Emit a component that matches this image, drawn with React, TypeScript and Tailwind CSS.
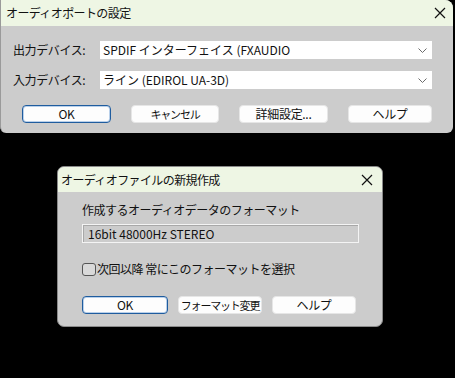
import React from "react";

const font = { fontFamily: '"Noto Sans CJK JP", "Noto Sans", sans-serif' };

function CloseIcon() {
  return (
    <svg width="12" height="12" viewBox="0 0 12 12" className="shrink-0">
      <path d="M1 1 L11 11 M11 1 L1 11" stroke="#111" strokeWidth="1.2" fill="none" />
    </svg>
  );
}

function Chevron() {
  return (
    <svg width="9" height="5" viewBox="0 0 9 5" className="shrink-0">
      <path d="M0.5 0.5 L4.5 4.5 L8.5 0.5" stroke="#6b6b6b" strokeWidth="1" fill="none" />
    </svg>
  );
}

function Btn({ label, w, primary, tight }: { label: string; w: string; primary?: boolean; tight?: boolean }) {
  return (
    <div
      className={`${w} h-[18px] shrink-0 overflow-hidden flex items-center justify-center whitespace-nowrap rounded-[4px] bg-[#fdfdfd] leading-none text-[#111] ${
        tight ? "text-[11px] tracking-[-1.2px]" : "text-[12px] tracking-[-0.3px]"
      } ${primary ? "border border-[#1f5c9e] shadow-[inset_0_0_0_1px_#b9d0ea]" : "border border-[#e6e6e6]"}`}
    >
      {label}
    </div>
  );
}

function Select({ value }: { value: string }) {
  return (
    <div className="w-[332px] h-[18px] bg-white flex items-center justify-between pl-[3px] pr-[5px] text-[12px] leading-none text-[#111]">
      <span>{value}</span>
      <Chevron />
    </div>
  );
}

export default function App() {
  return (
    <div className="w-[455px] h-[378px] bg-black overflow-hidden" style={font}>
      {/* audio port settings */}
      <div className="w-[453px] h-[133px] bg-[#cccccc] rounded-tr-[8px] rounded-b-[6px] border-l border-[#9a9a9a] flex flex-col">
        <div className="h-[26px] bg-[#eef6e4] rounded-tr-[8px] flex items-center justify-between pl-[5px] pr-[7px]">
          <span className="text-[12px] text-[#111] tracking-[-0.6px]">オーディオポートの設定</span>
          <CloseIcon />
        </div>
        <div className="flex flex-col pt-[15px]">
          <div className="flex items-center h-[18px]">
            <span className="w-[99px] pl-[12px] text-[12px] text-[#111] tracking-[-0.4px]">出力デバイス:</span>
            <Select value="SPDIF インターフェイス (FXAUDIO" />
          </div>
          <div className="flex items-center h-[18px] mt-[12px]">
            <span className="w-[99px] pl-[12px] text-[12px] text-[#111] tracking-[-0.4px]">入力デバイス:</span>
            <Select value="ライン (EDIROL UA-3D)" />
          </div>
          <div className="flex mt-[16px] pl-[21px] gap-[20px]">
            <Btn label="OK" w="w-[89px]" primary />
            <Btn label="キャンセル" w="w-[88px]" tight />
            <Btn label="詳細設定..." w="w-[89px]" />
            <Btn label="ヘルプ" w="w-[84px]" />
          </div>
        </div>
      </div>

      {/* new audio file */}
      <div className="ml-[57px] mt-[33px] w-[326px] h-[161px] bg-[#cccccc] rounded-[7px] border border-[#8a8a8a] overflow-hidden flex flex-col">
        <div className="h-[25px] bg-[#eef6e4] flex items-center justify-between pl-[3px] pr-[9px]">
          <span className="text-[12px] text-[#111] tracking-[-0.6px]">オーディオファイルの新規作成</span>
          <CloseIcon />
        </div>
        <div className="flex flex-col pl-[24px] pt-[9px]">
          <span className="text-[12px] text-[#111] tracking-[-0.5px] leading-[18px]">作成するオーディオデータのフォーマット</span>
          <div className="mt-[5px] w-[277px] h-[19px] border border-[#f4f4f4] shadow-[inset_1px_1px_0_#a8a8a8] flex items-center pl-[5px] text-[12px] leading-none text-[#111]">
            16bit 48000Hz STEREO
          </div>
          <div className="mt-[19px] flex items-center h-[14px]">
            <div className="w-[14px] h-[13px] rounded-[3px] border border-[#555] bg-[#d9d9d9]" />
            <span className="ml-[1px] text-[12px] text-[#111] tracking-[-0.5px]">次回以降 常にこのフォーマットを選択</span>
          </div>
          <div className="mt-[20px] flex gap-[10px]">
            <Btn label="OK" w="w-[86px]" primary />
            <Btn label="フォーマット変更" w="w-[84px]" tight />
            <Btn label="ヘルプ" w="w-[84px]" />
          </div>
        </div>
      </div>
    </div>
  );
}
